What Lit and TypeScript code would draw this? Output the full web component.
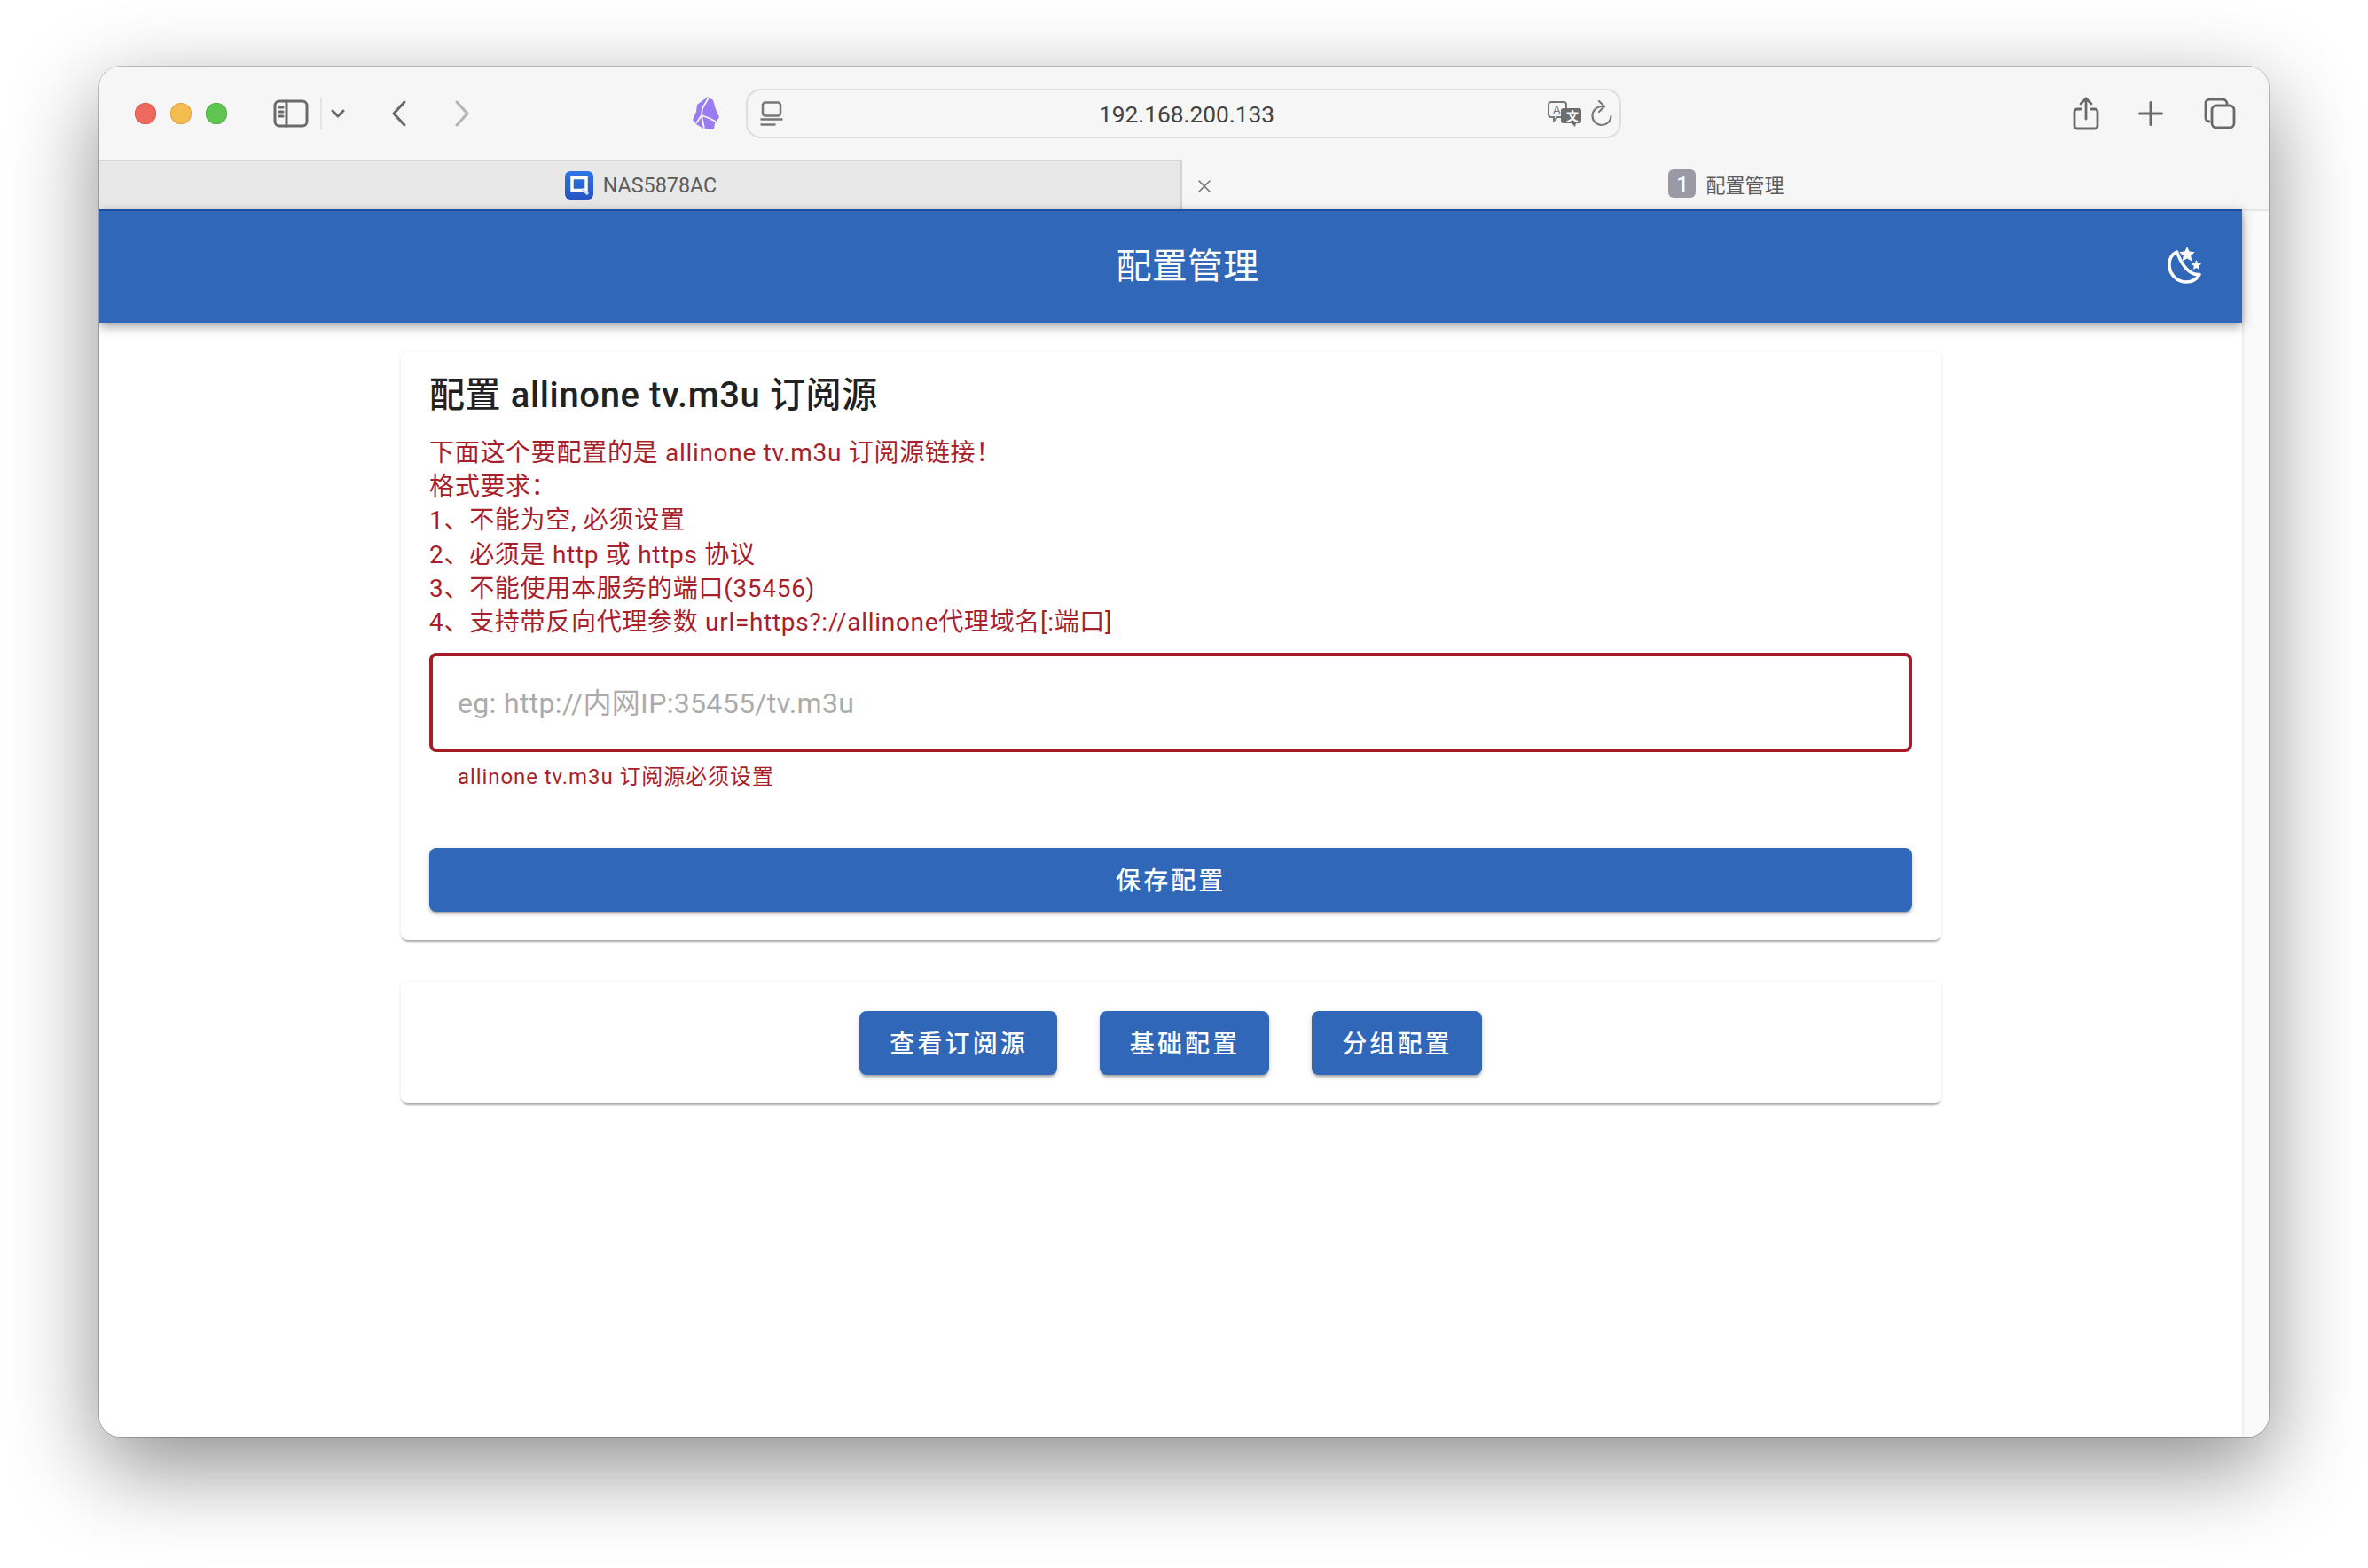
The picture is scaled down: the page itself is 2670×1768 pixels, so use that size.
import { LitElement, html, css } from "lit";
import { customElement } from "lit/decorators.js";

@customElement("app-root")
export class AppRoot extends LitElement {
  static styles = css`
    :host {
      display: block;
      box-sizing: border-box;
      width: 2670px;
      height: 1768px;
      padding: 75px 112px 148px;
      background: #fff;
      font-family: Roboto, "Noto Sans CJK SC", sans-serif;
      overflow: hidden;
    }
    * { box-sizing: border-box; }
    .window {
      height: 1545px;
      display: flex;
      flex-direction: column;
      border-radius: 24px;
      overflow: hidden;
      background: #fff;
    }
    .frame {
      border-radius: 24px;
      box-shadow: 0 34px 100px rgba(0,0,0,.45), 0 0 0 1px rgba(0,0,0,.22);
    }
    .toolbar {
      height: 105px;
      flex: none;
      display: flex;
      align-items: center;
      padding-left: 40px;
      background: #f6f6f6;
    }
    .dot { width: 24px; height: 24px; border-radius: 50%; margin-right: 16px; flex: none; }
    .red { background: #ef6a5e; box-shadow: inset 0 0 0 1px #dc5a4e; }
    .yellow { background: #f5bd4f; box-shadow: inset 0 0 0 1px #dfa63c; }
    .green { background: #61c554; box-shadow: inset 0 0 0 1px #52ad45; }
    svg { display: block; flex: none; }
    .ico { stroke: #6a6a6a; fill: none; stroke-width: 3; stroke-linecap: round; stroke-linejoin: round; }
    .sidebar { margin-left: 36px; }
    .divider { width: 2px; height: 36px; background: #e4e4e4; margin-left: 13px; }
    .chev { margin-left: 10px; }
    .back { margin-left: 52px; }
    .forward { margin-left: 53px; }
    .forward.ico { stroke: #b4b4b4; }
    .obsidian { margin-left: 251px; }
    .urlbar {
      width: 987px;
      height: 56px;
      margin-left: 30px;
      flex: none;
      border: 2px solid #dedede;
      border-radius: 17px;
      display: flex;
      align-items: center;
      position: relative;
      padding-left: 14px;
    }
    .url {
      position: absolute;
      left: 0;
      right: -7px;
      top: 13px;
      text-align: center;
      font-size: 26.300px;
      line-height: 28px;
      color: #424242;
      pointer-events: none;
    }
    .addr.ico { stroke-width: 2.500; stroke: #777; }
    .translate { margin-left: 861px; }
    .reload { margin-left: 8px; }
    .reload.ico { stroke-width: 2.200; stroke: #7a7a7a; }
    .share { margin-left: 509px; }
    .share.ico, .tabsicon.ico { stroke-width: 2.800; }
    .plus { margin-left: 44px; }
    .tabsicon { margin-left: 46px; }
    .tabs { height: 56px; flex: none; display: flex; background: #f6f6f6; }
    .tab {
      display: flex;
      align-items: center;
      justify-content: center;
      position: relative;
      color: #5c5c5c;
    }
    .tab.left {
      width: 1221px;
      flex: none;
      background: #e8e8e8;
      border-top: 2px solid #d2d2d2;
      border-right: 2px solid #d2d2d2;
      gap: 11px;
      padding-left: 2px;
      font-size: 23.300px;
    }
    .tab.right { flex: 1; gap: 11px; padding-left: 2px; font-size: 22px; padding-bottom: 2px; }
    .close { position: absolute; left: 17px; top: 22px; }
    .close.ico { stroke-width: 1.500; stroke: #707070; }
    .badge {
      width: 31px;
      height: 32px;
      padding-top: 2px;
      border-radius: 6px;
      background: #9a9aa6;
      color: #fff;
      font-size: 24px;
      font-weight: 500;
      display: flex;
      align-items: center;
      justify-content: center;
    }
    .page { flex: 1; display: flex; min-height: 0; }
    .main { flex: 1; min-width: 0; background: #fff; }
    .scroll {
      width: 30px;
      flex: none;
      background: #fafafa;
      border-left: 2px solid #eeeeee;
      border-top: 2px solid #e6e6e6;
    }
    .header {
      height: 128px;
      background: #3067b9;
      border-top: 2px solid #1c4fa0;
      box-shadow: 0 4px 12px rgba(0,0,0,.38);
      display: flex;
      align-items: center;
      color: #fff;
      position: relative;
    }
    .htitle {
      flex: 1;
      text-align: center;
      font-size: 40px;
      font-weight: 400;
      line-height: 56px;
      margin: 0;
      padding-left: 38px;
      letter-spacing: 0.3px;
    }
    .moon { position: absolute; right: 46px; top: 40px; }
    .card {
      width: 1737px;
      margin: 33px auto 0;
      background: #fff;
      border-radius: 8px;
      box-shadow: 0 3px 2px -1px rgba(0,0,0,.28), 0 1px 4px rgba(0,0,0,.1);
    }
    .form { padding: 21px 33px 32px 32.500px; }
    .title {
      font-size: 40px;
      font-weight: 500;
      line-height: 56px;
      letter-spacing: .62px;
      color: #222;
      margin: 0 0 18px;
    }
    .rules { font-size: 28px; line-height: 38.2px; letter-spacing: .7px; color: #a81e2a; margin: 0 0 15px; }
    .field {
      display: block;
      width: 100%;
      height: 112px;
      border: 4px solid #a31c27;
      border-radius: 8px;
      padding: 2px 28px 0;
      font: inherit;
      font-size: 32px;
      letter-spacing: .33px;
      outline: none;
      background: #fff;
    }
    .field::placeholder { color: #ababab; opacity: 1; }
    .help { font-size: 24px; line-height: 38px; letter-spacing: .92px; color: #a81e2a; margin: 9px 32px 61px; }
    button {
      font: inherit;
      font-size: 28px;
      font-weight: 500;
      letter-spacing: 3.1px;
      color: #fff;
      height: 72px;
      padding: 0 33px 2px 34px;
      border: 0;
      border-radius: 8px;
      background: #3067b9;
      box-shadow: 0 3px 3px -1px rgba(0,0,0,.3), 0 2px 6px rgba(0,0,0,.14);
    }
    .save { display: block; width: 100%; }
    .actions {
      margin-top: 47px;
      padding: 33px 32px 32px;
      display: flex;
      justify-content: center;
      gap: 48px;
    }
  `;

  render() {
    return html`
      <div class="frame">
        <div class="window">
          <div class="toolbar">
            <span class="dot red"></span><span class="dot yellow"></span><span class="dot green"></span>
            <svg class="sidebar" width="40" height="32" viewBox="0 0 40 32">
              <rect class="ico" x="2" y="2" width="36" height="28" rx="5"></rect>
              <path class="ico" d="M15 2v28M7 9h4M7 14h4M7 19h4"></path>
            </svg>
            <span class="divider"></span>
            <svg class="chev ico" width="16" height="12" viewBox="0 0 16 12"><path d="M2 3l6 6 6-6"></path></svg>
            <svg class="back ico" width="18" height="30" viewBox="0 0 18 30"><path d="M15 2L3 15l12 13"></path></svg>
            <svg class="forward ico" width="18" height="30" viewBox="0 0 18 30"><path d="M3 2l12 13L3 28"></path></svg>
            <svg class="obsidian" width="30" height="38" viewBox="0 0 30 38">
              <path fill="#9a7bf0" d="M17 0l6 4 3 10 4 9-5 7-1 7-12-1-8-5-4-5 4-9 1-8z"></path>
              <path fill="none" stroke="#f6f6f6" stroke-width="1.8" d="M18 1l-7 12-1 8-6 9M10 21l8 3 8 4M10 21l3 15"></path>
            </svg>
            <div class="urlbar">
              <svg class="addr ico" width="26" height="28" viewBox="0 0 26 28">
                <rect x="3" y="1.500" width="20" height="15" rx="3"></rect>
                <path d="M1.500 20.500h23M1.500 26.500h15"></path>
              </svg>
              <span class="url">192.168.200.133</span>
              <svg class="translate" width="40" height="30" viewBox="0 0 40 30">
                <path fill="none" stroke="#777" stroke-width="2" d="M5 2h14a3 3 0 0 1 3 3v11a3 3 0 0 1-3 3h-7l-4 4v-4H5a3 3 0 0 1-3-3V5a3 3 0 0 1 3-3z"></path>
                <text x="7" y="15" font-size="13" fill="#777" font-family="Roboto">A</text>
                <path fill="#6e6e6e" d="M19 9h17a3 3 0 0 1 3 3v11a3 3 0 0 1-3 3h-3l-1 4-4-4h-9a3 3 0 0 1-3-3V12a3 3 0 0 1 3-3z"></path>
                <text x="22" y="23" font-size="14" font-weight="700" fill="#f6f6f6" font-family="Noto Sans CJK SC">文</text>
              </svg>
              <svg class="reload ico" width="26" height="30" viewBox="0 0 26 30">
                <path d="M14 7a10.500 10.500 0 1 0 10.500 11"></path><path d="M11 1l6 6-6 6"></path>
              </svg>
            </div>
            <svg class="share ico" width="30" height="38" viewBox="0 0 30 38">
              <path d="M9 14H5a3 3 0 0 0-3 3v16a3 3 0 0 0 3 3h20a3 3 0 0 0 3-3V17a3 3 0 0 0-3-3h-4M15 25V2M9 8l6-6 6 6"></path>
            </svg>
            <svg class="plus ico" width="28" height="28" viewBox="0 0 28 28"><path d="M14 1.500v25M1.500 14h25"></path></svg>
            <svg class="tabsicon ico" width="36" height="36" viewBox="0 0 36 36">
              <rect x="9" y="9" width="25" height="25" rx="5"></rect>
              <path d="M6 27a4 4 0 0 1-4-4V6a4 4 0 0 1 4-4h15a5 5 0 0 1 5 5"></path>
            </svg>
          </div>
          <div class="tabs">
            <div class="tab left">
              <svg width="32" height="32" viewBox="0 0 32 32">
                <defs><linearGradient id="fav" x1="0" y1="0" x2="0" y2="1"><stop offset="0" stop-color="#2f74e6"></stop><stop offset="1" stop-color="#2455c2"></stop></linearGradient></defs>
                <rect width="32" height="32" rx="6" fill="url(#fav)"></rect>
                <path d="M8 7.500h16v14H8z" fill="none" stroke="#fff" stroke-width="3.500"></path>
                <path d="M19 20l7 6" stroke="#cfe0fa" stroke-width="3"></path>
              </svg>
              <span>NAS5878AC</span>
            </div>
            <div class="tab right">
              <svg class="close ico" width="16" height="16" viewBox="0 0 16 16"><path d="M2 2l12 12M14 2L2 14"></path></svg>
              <span class="badge">1</span>
              <span>配置管理</span>
            </div>
          </div>
          <div class="page">
            <div class="main">
              <div class="header">
                <h1 class="htitle">配置管理</h1>
                <svg class="moon" width="38" height="42" viewBox="0 0 38 42">
                  <path fill="none" stroke="#fff" stroke-width="3.600" stroke-linejoin="round" d="M10.500 6C4 9 1.500 15 2 22c.7 10 9 18 19 18 7 0 12-3.500 15-8.500-11 1-20-10-25.500-25.500z"></path>
                  <path fill="#fff" d="M22 0l2.600 5.600 6.100.7-4.500 4.100 1.200 6L22 13.400l-5.400 3 1.200-6-4.500-4.100 6.100-.7zM32.500 15l1.700 3.700 4 .5-3 2.800.8 4-3.500-2-3.500 2 .8-4-3-2.800 4-.5z"></path>
                </svg>
              </div>
              <section class="card form">
                <h2 class="title">配置 allinone tv.m3u 订阅源</h2>
                <div class="rules">
                  下面这个要配置的是 allinone tv.m3u 订阅源链接！<br />
                  格式要求：<br />
                  1、不能为空, 必须设置<br />
                  2、必须是 http 或 https 协议<br />
                  3、不能使用本服务的端口(35456)<br />
                  4、支持带反向代理参数 url=https?://allinone代理域名[:端口]
                </div>
                <input class="field" placeholder="eg: http://内网IP:35455/tv.m3u" />
                <div class="help">allinone tv.m3u 订阅源必须设置</div>
                <button class="save">保存配置</button>
              </section>
              <section class="card actions">
                <button>查看订阅源</button>
                <button>基础配置</button>
                <button>分组配置</button>
              </section>
            </div>
            <div class="scroll"></div>
          </div>
        </div>
      </div>
    `;
  }
}
